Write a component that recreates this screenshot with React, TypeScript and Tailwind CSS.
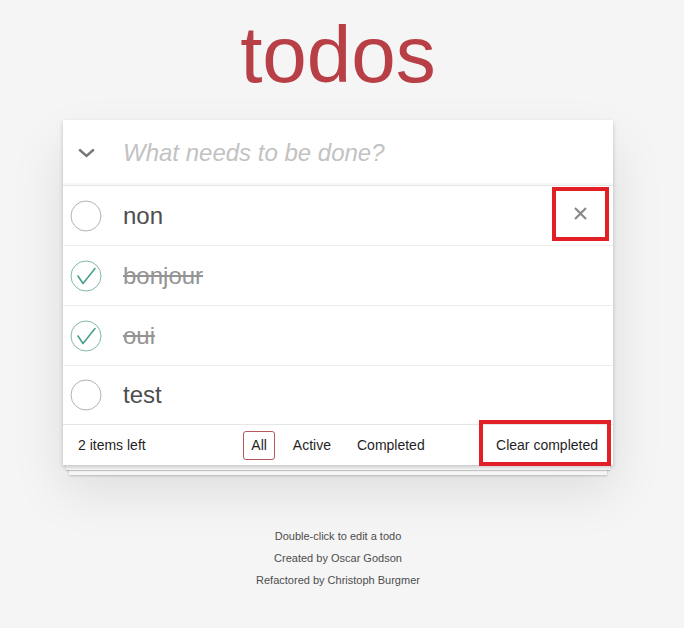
import React from 'react';

type Todo = { id: number; title: string; completed: boolean };

const todos: Todo[] = [
  { id: 1, title: 'non', completed: false },
  { id: 2, title: 'bonjour', completed: true },
  { id: 3, title: 'oui', completed: true },
  { id: 4, title: 'test', completed: false },
];

const Toggle: React.FC<{ checked: boolean }> = ({ checked }) => (
  <svg width="40" height="40" viewBox="0 0 40 40" className="shrink-0">
    <circle cx="20" cy="20" r="15" fill="none" stroke={checked ? '#7fb9ad' : '#b3b3b3'} strokeWidth="1" />
    {checked && (
      <path d="M12 20 L17 27.5 L29 12.5" fill="none" stroke="#4a9f8c" strokeWidth="1.6" strokeLinecap="round" strokeLinejoin="round" />
    )}
  </svg>
);

const App: React.FC = () => {
  return (
    <div className="min-h-screen bg-[#f5f5f5] font-['Liberation_Sans',Arial,sans-serif] text-[#4d4d4d] pt-[15px]">
      <div className="w-[550px] ml-[63px]">
        <h1 className="text-center text-[80px] leading-none font-normal text-[#b83f45] h-[80px]">todos</h1>

        <section className="relative mt-[25px] bg-white shadow-[0_2px_4px_0_rgba(0,0,0,0.2),0_8px_0_-3px_#f6f6f6,0_9px_1px_-3px_rgba(0,0,0,0.2),0_16px_0_-6px_#f6f6f6,0_17px_2px_-6px_rgba(0,0,0,0.2),0_25px_50px_0_rgba(0,0,0,0.1)]">
          <div className="flex items-center h-[66px] border-b border-[#e6e6e6] shadow-[inset_0_-2px_1px_rgba(0,0,0,0.03)]">
            <div className="w-[60px] pl-[15px]">
              <svg width="17" height="10" viewBox="0 0 17 10" className="block">
                <path d="M1.2 1.5 L8.5 8 L15.8 1.5" fill="none" stroke="#777777" strokeWidth="2.4" />
              </svg>
            </div>
            <span className="text-[24px] italic text-[#c2c2c2]">What needs to be done?</span>
          </div>

          <ul>
            {todos.map(todo => (
              <li key={todo.id} className="flex items-center h-[60px] border-b border-[#ededed] last:h-[59px]">
                <div className="ml-[3px]">
                  <Toggle checked={todo.completed} />
                </div>
                <span
                  className={
                    todo.completed
                      ? 'ml-[17px] text-[24px] text-[#949494] line-through flex-1'
                      : 'ml-[17px] text-[24px] text-[#4d4d4d] flex-1'
                  }
                >
                  {todo.title}
                </span>
                {todo.id === 1 && (
                  <div className="mr-[4px] mb-[4px] w-[57px] h-[54px] border-4 border-[#e21f26] flex items-center justify-center">
                    <svg width="13" height="13" viewBox="0 0 13 13">
                      <path d="M1 1 L12 12 M12 1 L1 12" stroke="#8a8a8a" strokeWidth="2.2" />
                    </svg>
                  </div>
                )}
              </li>
            ))}
          </ul>

          <footer className="relative grid grid-cols-[1fr_auto_1fr] items-center h-[41px] px-[15px] text-[14px] text-[#1f1f1f] -mt-px border-t border-[#e6e6e6]">
            <span>2 items left</span>
            <div className="flex items-center gap-[10px]">
              <span className="px-[7px] py-[3px] border border-[#b5585c] rounded-[3px]">All</span>
              <span className="px-[7px] py-[3px] border border-transparent rounded-[3px]">Active</span>
              <span className="px-[7px] py-[3px] border border-transparent rounded-[3px]">Completed</span>
            </div>
            <span className="justify-self-end">Clear completed</span>
            <div className="absolute left-[416px] top-[-5px] w-[132px] h-[46px] border-4 border-[#e21f26]" />
          </footer>
        </section>

        <div className="mt-[66px] flex flex-col items-center gap-[11px] text-[11px] leading-none text-[#4d4d4d]">
          <p>Double-click to edit a todo</p>
          <p>Created by Oscar Godson</p>
          <p>Refactored by Christoph Burgmer</p>
        </div>
      </div>
    </div>
  );
};

export default App;
